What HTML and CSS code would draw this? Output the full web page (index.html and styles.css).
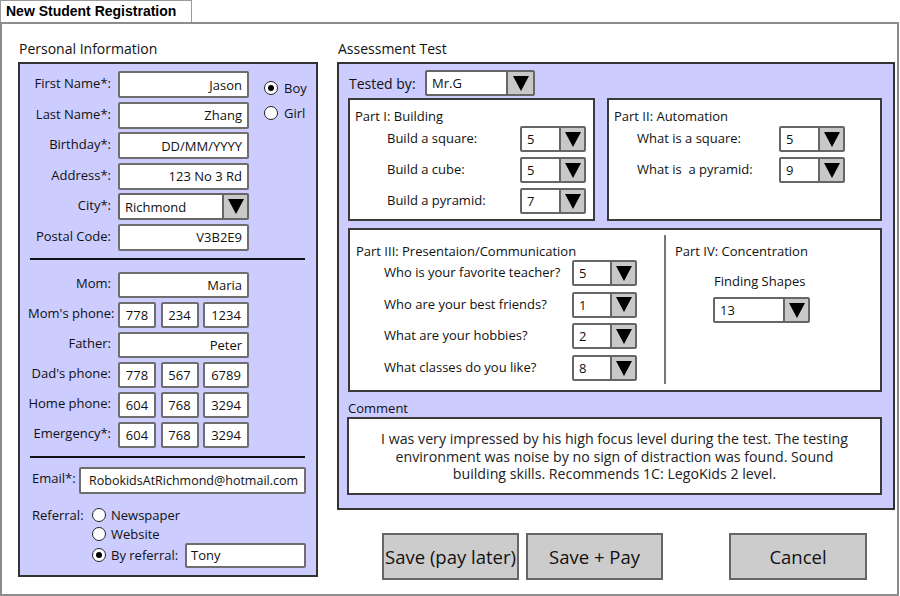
FILE: index.html
```html
<!DOCTYPE html>
<html>
<head>
<meta charset="utf-8">
<link rel="stylesheet" href="styles.css">
</head>
<body>
<div class="window">
  <div class="tabbar"><div class="tab">New Student Registration</div></div>
  <div class="frame">
    <div class="col-left">
      <div class="sec-title">Personal Information</div>
      <div class="panel personal">
        <div class="g1">
          <div class="lbl">First Name*:</div><div class="inp">Jason</div>
          <div class="radio-opt boy"><span class="radio on"></span>Boy</div>
          <div class="lbl">Last Name*:</div><div class="inp">Zhang</div>
          <div class="radio-opt girl"><span class="radio"></span>Girl</div>
          <div class="lbl">Birthday*:</div><div class="inp">DD/MM/YYYY</div><div></div>
          <div class="lbl">Address*:</div><div class="inp">123 No 3 Rd</div><div></div>
          <div class="lbl">City*:</div><div class="sel"><div class="val">Richmond</div><div class="arr"><span class="tri"></span></div></div><div></div>
          <div class="lbl">Postal Code:</div><div class="inp">V3B2E9</div><div></div>
        </div>
        <div class="sep sep1"></div>
        <div class="g2">
          <div class="lbl">Mom:</div><div class="inp">Maria</div>
          <div class="lbl">Mom's phone:</div><div class="phone"><div class="inp c p3">778</div><div class="inp c p3">234</div><div class="inp c p4">1234</div></div>
          <div class="lbl">Father:</div><div class="inp">Peter</div>
          <div class="lbl">Dad's phone:</div><div class="phone"><div class="inp c p3">778</div><div class="inp c p3">567</div><div class="inp c p4">6789</div></div>
          <div class="lbl">Home phone:</div><div class="phone"><div class="inp c p3">604</div><div class="inp c p3">768</div><div class="inp c p4">3294</div></div>
          <div class="lbl">Emergency*:</div><div class="phone"><div class="inp c p3">604</div><div class="inp c p3">768</div><div class="inp c p4">3294</div></div>
        </div>
        <div class="sep sep2"></div>
        <div class="email-row"><div class="email-lbl">Email*:</div><div class="inp email">RobokidsAtRichmond@hotmail.com</div></div>
        <div class="referral">
          <div class="ref-lbl">Referral:</div>
          <div class="ref-opts">
            <div class="ref-opt"><span class="radio"></span>Newspaper</div>
            <div class="ref-opt"><span class="radio"></span>Website</div>
            <div class="ref-opt last"><span class="radio on"></span>By referral:<div class="inp ref-inp">Tony</div></div>
          </div>
        </div>
      </div>
    </div>
    <div class="col-right">
      <div class="sec-title">Assessment Test</div>
      <div class="panel assess">
        <div class="tested"><div class="tested-lbl">Tested by:</div><div class="sel tested-sel"><div class="val">Mr.G</div><div class="arr"><span class="tri"></span></div></div></div>
        <div class="parts">
          <div class="box part1">
            <div class="ptitle">Part I: Building</div>
            <div class="prow"><div class="plbl">Build a square:</div><div class="sel psel"><div class="val">5</div><div class="arr"><span class="tri"></span></div></div></div>
            <div class="prow"><div class="plbl">Build a cube:</div><div class="sel psel"><div class="val">5</div><div class="arr"><span class="tri"></span></div></div></div>
            <div class="prow"><div class="plbl">Build a pyramid:</div><div class="sel psel"><div class="val">7</div><div class="arr"><span class="tri"></span></div></div></div>
          </div>
          <div class="box part2">
            <div class="ptitle">Part II: Automation</div>
            <div class="prow"><div class="plbl">What is a square:</div><div class="sel psel"><div class="val">5</div><div class="arr"><span class="tri"></span></div></div></div>
            <div class="prow"><div class="plbl">What is &nbsp;a pyramid:</div><div class="sel psel"><div class="val">9</div><div class="arr"><span class="tri"></span></div></div></div>
          </div>
        </div>
        <div class="box part34">
          <div class="part3">
            <div class="ptitle">Part III: Presentaion/Communication</div>
            <div class="prow"><div class="plbl">Who is your favorite teacher?</div><div class="sel psel3"><div class="val">5</div><div class="arr"><span class="tri"></span></div></div></div>
            <div class="prow"><div class="plbl">Who are your best friends?</div><div class="sel psel3"><div class="val">1</div><div class="arr"><span class="tri"></span></div></div></div>
            <div class="prow"><div class="plbl">What are your hobbies?</div><div class="sel psel3"><div class="val">2</div><div class="arr"><span class="tri"></span></div></div></div>
            <div class="prow"><div class="plbl">What classes do you like?</div><div class="sel psel3"><div class="val">8</div><div class="arr"><span class="tri"></span></div></div></div>
          </div>
          <div class="vdiv"></div>
          <div class="part4">
            <div class="ptitle">Part IV: Concentration</div>
            <div class="shapes">Finding Shapes</div>
            <div class="sel psel4"><div class="val">13</div><div class="arr"><span class="tri"></span></div></div>
          </div>
        </div>
        <div class="comment-lbl">Comment</div>
        <div class="box comment">I was very impressed by his high focus level during the test. The testing<br>environment was noise by no sign of distraction was found. Sound<br>building skills. Recommends 1C: LegoKids 2 level.</div>
      </div>
      <div class="buttons">
        <div class="btn">Save (pay later)</div>
        <div class="btn">Save + Pay</div>
        <div class="btn cancel">Cancel</div>
      </div>
    </div>
  </div>
</div>
</body>
</html>
```

FILE: styles.css
```css
* { box-sizing: border-box; }
body {
  margin: 0;
  font-family: "Comic Sans MS", "Open Sans", sans-serif;
  font-size: 13px;
  color: #111;
  background: #fff;
}
.window { width: 900px; height: 596px; }
.tabbar { height: 22px; display: flex; }
.tab {
  width: 192px;
  height: 22px;
  border: 1px solid #9a9a9a;
  border-bottom: none;
  background: #fff;
  font: bold 14px "Liberation Sans", Arial, sans-serif;
  padding: 2px 0 0 5px;
  color: #000;
}
.frame {
  width: 899px;
  height: 574px;
  border: 2px solid #8c8c8c;
  display: flex;
  gap: 19px;
  padding: 15px 0 0 16px;
}
.col-left { width: 300px; display: flex; flex-direction: column; }
.col-right { width: 558px; display: flex; flex-direction: column; }
.sec-title { height: 20px; line-height: 20px; font-size: 14px; margin: 0 0 3px 1px; }
.panel { border: 2px solid #333; background: #ccccff; }
.personal { height: 515px; padding: 7px 10px 0 8px; }

.g1 {
  display: grid;
  grid-template-columns: 83px 131px auto;
  column-gap: 7px;
  row-gap: 3.6px;
  grid-auto-rows: 27px;
  align-items: center;
}
.g2 {
  display: grid;
  grid-template-columns: 83px 131px;
  column-gap: 7px;
  row-gap: 4px;
  grid-auto-rows: 26px;
  align-items: center;
}
.lbl { text-align: right; white-space: nowrap; margin-top: -3px; }
.inp {
  height: 100%;
  border: 2px solid #6e6e6e;
  border-radius: 2px;
  background: #fff;
  display: flex;
  align-items: center;
  justify-content: flex-end;
  padding: 0 5px;
  white-space: nowrap;
}
.inp.c { justify-content: center; padding: 0; }
.phone { display: flex; gap: 4.5px; height: 100%; }
.p3 { width: 38px; }
.p4 { width: 46px; }

.radio-opt { display: flex; align-items: center; gap: 6px; padding-left: 8px; }
.radio-opt.boy { margin-top: 6px; }
.radio-opt.girl { margin-top: -5px; }
.radio {
  width: 14px; height: 14px;
  border: 1.6px solid #222;
  border-radius: 50%;
  background: #fff;
  display: inline-flex;
  align-items: center;
  justify-content: center;
  flex: none;
}
.radio.on::after {
  content: "";
  width: 6px; height: 6px;
  border-radius: 50%;
  background: #000;
}

.sel {
  display: flex;
  height: 26px;
  border: 2px solid #666;
  border-radius: 2px;
  background: #fff;
}
.g1 .sel { height: 27px; }
.sel .val { flex: 1; padding-left: 5px; display: flex; align-items: center; }
.sel .arr {
  width: 25px;
  background: #c8c8c8;
  border-left: 2px solid #666;
  display: flex;
  align-items: center;
  justify-content: center;
}
.tri {
  width: 0; height: 0;
  border-left: 8px solid transparent;
  border-right: 8px solid transparent;
  border-top: 15px solid #000;
}

.sep { height: 2px; background: #111; margin-left: 2px; margin-right: 1px; }
.sep1 { margin-top: 7px; margin-bottom: 12px; }
.sep2 { margin-top: 8px; margin-bottom: 9px; }

.email-row { display: flex; height: 27px; align-items: center; }
.email-lbl { width: 51px; padding-left: 4px; margin-top: -4px; }
.email { width: 227px; justify-content: flex-start; padding-left: 8px; font-size: 12.5px; }

.referral { display: flex; margin-top: 12px; }
.ref-lbl { width: 64px; padding-left: 4px; height: 18px; line-height: 18px; }
.ref-opts { display: flex; flex-direction: column; flex: 1; }
.ref-opt { display: flex; align-items: center; gap: 5px; height: 18.5px; white-space: nowrap; }
.ref-opt.last { height: 25px; }
.ref-inp { width: 121px; height: 25px; margin-left: auto; justify-content: flex-start; padding-left: 4px; }

.assess { height: 448px; padding: 6px 11px 0 9px; }
.tested { display: flex; align-items: center; height: 26px; }
.tested-lbl { width: 77px; padding-left: 1px; font-size: 14px; }
.tested-sel { width: 110px; }
.tested-sel .arr { width: 27px; }

.parts { display: flex; gap: 12px; margin-top: 2px; }
.box { background: #fff; border: 2px solid #3a3a3a; }
.part1 { width: 247px; height: 123px; padding: 7px 0 0 5px; }
.part2 { width: 275px; height: 123px; padding: 7px 0 0 5px; }
.ptitle { height: 18px; line-height: 18px; white-space: nowrap; }
.prow { display: flex; align-items: center; height: 26px; margin-top: 5px; }
.ptitle + .prow { margin-top: 1px; }
.part1 .prow { margin-left: 32px; }
.part1 .plbl { width: 133px; }
.part2 .prow { margin-left: 23px; }
.part2 .plbl { width: 142px; }
.psel { width: 66px; }
.plbl { white-space: nowrap; margin-top: -2px; }

.part34 { display: flex; height: 164px; margin-top: 7px; }
.part3 { width: 314px; padding: 12px 0 0 6px; }
.part3 .prow { margin-left: 28px; margin-top: 5.7px; }
.part3 .ptitle + .prow { margin-top: 0; }
.part3 .plbl { width: 188px; }
.psel3 { width: 65px; }
.vdiv { width: 2px; background: #777; margin: 5px 0 6px; }
.part4 { padding: 12px 0 0 9px; }
.shapes { margin: 12px 0 0 39px; height: 18px; line-height: 18px; }
.psel4 { width: 97px; margin: 7px 0 0 38px; }

.comment-lbl { margin-top: 8px; height: 16px; line-height: 16px; }
.comment {
  margin: 1px 0 0 -1px;
  width: 535px;
  height: 78px;
  padding: 11px 0 0;
  text-align: center;
  line-height: 17.5px;
  font-size: 14.2px;
  color: #222;
  white-space: nowrap;
}

.buttons { display: flex; margin-top: 23px; padding-left: 45px; gap: 7px; }
.btn {
  width: 137px;
  height: 47px;
  background: #cccccc;
  border: 2px solid #666;
  display: flex;
  align-items: center;
  justify-content: center;
  font-size: 18.5px;
  white-space: nowrap;
}
.btn.cancel { margin-left: 59px; width: 138px; }
```
